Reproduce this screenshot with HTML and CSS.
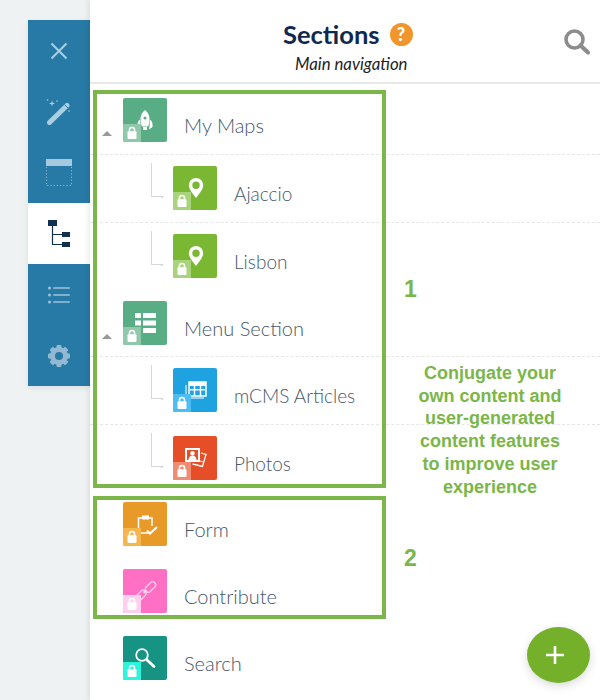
FILE: index.html
```html
<!DOCTYPE html>
<html lang="en">
<head>
    <meta charset="UTF-8">
    <meta name="viewport" content="width=device-width, initial-scale=1.0">
    <title>Sections</title>
    <link rel="stylesheet" href="styles.css">
</head>
<body>
    <svg class="defs" width="0" height="0">
        <symbol id="lock" viewBox="0 0 18 18">
            <path d="M5.700 8V6a3.300 3.300 0 0 1 6.600 0V8h-1.500V6a1.800 1.800 0 0 0-3.600 0V8z" fill="#fff"/>
            <rect x="4.500" y="7.300" width="9" height="7.700" rx="1" fill="#fff"/>
        </symbol>
    </svg>

    <aside class="side">
        <nav class="rail">
            <div class="rail-item">
                <svg width="24" height="24" viewBox="0 0 24 24"><path d="M4.500 4.500l15 15M19.500 4.500l-15 15" stroke="#a8cfe2" stroke-width="2" fill="none"/></svg>
            </div>
            <div class="rail-item">
                <svg width="26" height="26" viewBox="0 0 26 26">
                    <path d="M3.500 23.500L21 6.500" stroke="#a8cfe2" stroke-width="5" stroke-linecap="round"/>
                    <path d="M18.500 5.500l3.500 3.500" stroke="#277aa6" stroke-width="1"/>
                    <path d="M6 1.500l.7 2.300L9 4.500l-2.300.7L6 7.500l-.7-2.300L3 4.500l2.300-.7z" fill="#a8cfe2"/>
                    <circle cx="1.500" cy="1" r=".8" fill="#a8cfe2"/><circle cx="11" cy="2" r=".8" fill="#a8cfe2"/><circle cx="23" cy="12" r=".8" fill="#a8cfe2"/>
                </svg>
            </div>
            <div class="rail-item">
                <svg width="26" height="27" viewBox="0 0 26 27">
                    <rect x="0" y="0" width="26" height="7" fill="#a7c9dd"/>
                    <path d="M.5 8v18.500h25V8" fill="none" stroke="#8fbad3" stroke-dasharray="1.200 2"/>
                </svg>
            </div>
            <div class="rail-item active">
                <svg width="22" height="27" viewBox="0 0 22 27">
                    <path d="M4.500 4v20.500h10M4.500 14.500h10" fill="none" stroke="#10304f" stroke-width="1.200"/>
                    <rect x="0" y="0" width="9" height="6" fill="#10304f"/>
                    <rect x="14" y="12" width="8" height="5" fill="#10304f"/>
                    <rect x="14" y="22" width="8" height="5" fill="#10304f"/>
                </svg>
            </div>
            <div class="rail-item">
                <svg width="22" height="18" viewBox="0 0 22 18">
                    <g fill="#9cc3da">
                        <circle cx="1.500" cy="2" r="1.500"/><rect x="5" y="1.200" width="17" height="1.600" rx=".8"/>
                        <circle cx="1.500" cy="9" r="1.500"/><rect x="5" y="8.200" width="17" height="1.600" rx=".8"/>
                        <circle cx="1.500" cy="16" r="1.500"/><rect x="5" y="15.200" width="17" height="1.600" rx=".8"/>
                    </g>
                </svg>
            </div>
            <div class="rail-item">
                <svg width="24" height="24" viewBox="0 0 24 24">
                    <g fill="#93b9d2">
                        <circle cx="12" cy="12" r="9"/>
                        <rect x="9.500" y="1" width="5" height="22" rx="1"/>
                        <rect x="9.500" y="1" width="5" height="22" rx="1" transform="rotate(45 12 12)"/>
                        <rect x="9.500" y="1" width="5" height="22" rx="1" transform="rotate(90 12 12)"/>
                        <rect x="9.500" y="1" width="5" height="22" rx="1" transform="rotate(135 12 12)"/>
                    </g>
                    <circle cx="12" cy="12" r="4" fill="#277aa6"/>
                </svg>
            </div>
        </nav>
    </aside>

    <main class="main">
        <header class="head">
            <div class="head-title">
                <div class="title-line">
                    <h1>Sections</h1>
                    <span class="help">?</span>
                </div>
                <p class="subtitle">Main navigation</p>
            </div>
            <svg class="head-search" width="28" height="28" viewBox="0 0 28 28">
                <circle cx="11.500" cy="11.500" r="8.500" fill="none" stroke="#8c8c8c" stroke-width="3.600"/>
                <path d="M17.500 17.500l7.500 7" stroke="#8c8c8c" stroke-width="4.200" stroke-linecap="round"/>
            </svg>
        </header>

        <div class="rows">
            <div class="row tall dashed">
                <span class="caret"></span>
                <div class="tile t-sea">
                    <svg class="glyph" viewBox="0 0 44 44" fill="#fff">
                        <path d="M22 12c3.200 2.500 4.500 5.500 4.500 9 0 3-.5 5.500-1.500 7.500h-6c-1-2-1.500-4.500-1.500-7.500 0-3.500 1.300-6.500 4.500-9z"/>
                        <path d="M17 21.500c-2 1.500-3 4-2.500 7.500l3.500 2.500-.5-3.500zM27 21.500c2 1.500 3 4 2.500 7.500l-3.500 2.500.5-3.500z"/>
                        <rect x="20" y="29" width="4" height="3"/>
                        <circle cx="22" cy="20" r="1.500" fill="#58ad85"/>
                    </svg>
                    <span class="lock"><svg width="18" height="18"><use href="#lock"/></svg></span>
                </div>
                <span class="label">My Maps</span>
            </div>

            <div class="row tall dashed child">
                <span class="elbow"></span>
                <div class="tile t-green">
                    <svg class="glyph" viewBox="0 0 44 44">
                        <path fill-rule="evenodd" fill="#fff" d="M23 12a7.200 7.200 0 0 1 7.200 7.200c0 4-3.700 8-7.200 12.800-3.500-4.800-7.200-8.800-7.200-12.800A7.200 7.200 0 0 1 23 12zm0 3.500a3.700 3.700 0 1 0 0 7.400 3.700 3.700 0 0 0 0-7.400z"/>
                    </svg>
                    <span class="lock"><svg width="18" height="18"><use href="#lock"/></svg></span>
                </div>
                <span class="label">Ajaccio</span>
            </div>

            <div class="row child">
                <span class="elbow"></span>
                <div class="tile t-green">
                    <svg class="glyph" viewBox="0 0 44 44">
                        <path fill-rule="evenodd" fill="#fff" d="M23 12a7.200 7.200 0 0 1 7.200 7.200c0 4-3.700 8-7.200 12.800-3.500-4.800-7.200-8.800-7.200-12.800A7.200 7.200 0 0 1 23 12zm0 3.500a3.700 3.700 0 1 0 0 7.400 3.700 3.700 0 0 0 0-7.400z"/>
                    </svg>
                    <span class="lock"><svg width="18" height="18"><use href="#lock"/></svg></span>
                </div>
                <span class="label">Lisbon</span>
            </div>

            <div class="row dashed">
                <span class="caret"></span>
                <div class="tile t-sea">
                    <svg class="glyph" viewBox="0 0 44 44" fill="#fff">
                        <rect x="12" y="12" width="6" height="5"/><rect x="20" y="12" width="13" height="5"/>
                        <rect x="12" y="19.500" width="6" height="5"/><rect x="20" y="19.500" width="13" height="5"/>
                        <rect x="20" y="27" width="13" height="5"/>
                    </svg>
                    <span class="lock"><svg width="18" height="18"><use href="#lock"/></svg></span>
                </div>
                <span class="label">Menu Section</span>
            </div>

            <div class="row tall dashed child">
                <span class="elbow"></span>
                <div class="tile t-blue">
                    <svg class="glyph" viewBox="0 0 44 44">
                        <path d="M13 17v13h18" fill="none" stroke="#bfe3f7" stroke-width="1.500"/>
                        <rect x="16" y="14" width="17" height="14" fill="none" stroke="#fff" stroke-width="1.500"/>
                        <rect x="16" y="14" width="17" height="4" fill="#fff"/>
                        <path d="M21.500 18v10M27.500 18v10" stroke="#fff" stroke-width="1.500"/>
                        <rect x="17" y="21" width="15" height="1.500" fill="#fff"/>
                    </svg>
                    <span class="lock"><svg width="18" height="18"><use href="#lock"/></svg></span>
                </div>
                <span class="label">mCMS Articles</span>
            </div>

            <div class="row short child">
                <span class="elbow"></span>
                <div class="tile t-red">
                    <svg class="glyph" viewBox="0 0 44 44">
                        <path d="M28 17l5 1.500-3.500 12-10-2.500" fill="none" stroke="#fff" stroke-width="1.300"/>
                        <path d="M27 25l3.500 1M24 29l4 1" stroke="#fff" stroke-width="1"/>
                        <rect x="12" y="12" width="15" height="14" fill="#fff"/>
                        <rect x="14" y="14" width="11" height="10" fill="#e54e26"/>
                        <circle cx="19.500" cy="17.300" r="2.200" fill="#fff"/>
                        <path d="M15.500 24c0-3 1.800-4.500 4-4.500s4 1.500 4 4.500z" fill="#fff"/>
                    </svg>
                    <span class="lock"><svg width="18" height="18"><use href="#lock"/></svg></span>
                </div>
                <span class="label">Photos</span>
            </div>

            <div class="row">
                <div class="tile t-orange">
                    <svg class="glyph" viewBox="0 0 44 44">
                        <path d="M19 16h-3.500v15H27M26 16h3v8" fill="none" stroke="#fff" stroke-width="1.500"/>
                        <rect x="19" y="13.500" width="7" height="4" fill="#fff"/>
                        <path d="M24 28.500l3 3 7-6.500" fill="none" stroke="#fff" stroke-width="2"/>
                    </svg>
                    <span class="lock"><svg width="18" height="18"><use href="#lock"/></svg></span>
                </div>
                <span class="label">Form</span>
            </div>

            <div class="row">
                <div class="tile t-pink">
                    <svg class="glyph" viewBox="0 0 44 44" fill="none" stroke="#ffd0ee" stroke-width="1.200">
                        <rect x="24.500" y="12" width="6" height="12" rx="3" transform="rotate(45 27.500 18)"/>
                        <rect x="15" y="20.500" width="6" height="12" rx="3" transform="rotate(45 18 26.500)"/>
                        <path d="M20.500 24l3-3" stroke-width="2"/>
                    </svg>
                    <span class="lock"><svg width="18" height="18"><use href="#lock"/></svg></span>
                </div>
                <span class="label">Contribute</span>
            </div>

            <div class="row">
                <div class="tile t-teal">
                    <svg class="glyph" viewBox="0 0 44 44">
                        <circle cx="19" cy="19" r="5.800" fill="none" stroke="#fff" stroke-width="1.800"/>
                        <path d="M24 24l7 6.500" stroke="#fff" stroke-width="2.800" stroke-linecap="round"/>
                    </svg>
                    <span class="lock"><svg width="18" height="18"><use href="#lock"/></svg></span>
                </div>
                <span class="label">Search</span>
            </div>
        </div>
    </main>

    <!-- green notes drawn over the list -->
    <div class="note-box box-one"></div>
    <div class="note-box box-two"></div>
    <span class="note-num num-one">1</span>
    <span class="note-num num-two">2</span>
    <p class="note-text">Conjugate your own content and user-generated content features to improve user experience</p>

    <button class="fab">
        <svg width="20" height="20" viewBox="0 0 20 20"><path d="M10 1v18M1 10h18" stroke="#fff" stroke-width="2.600"/></svg>
    </button>
</body>
</html>
```

FILE: styles.css
```css
html, body {
    height: 700px;
}
body {
    margin: 0;
    display: flex;
    overflow: hidden;
    position: relative;
    background: #eef2f3;
    font-family: Lato, "Open Sans", sans-serif;
}
.defs {
    position: absolute;
}
.side {
    width: 90px;
    flex: none;
    padding: 20px 0 0 28px;
    box-sizing: border-box;
}
.rail {
    background: #277aa6;
    box-shadow: 0 2px 6px rgba(0, 0, 0, 0.08);
}
.rail-item {
    height: 61px;
    display: flex;
    align-items: center;
    justify-content: center;
}
.rail-item.active {
    background: #fff;
}
.main {
    flex: 1;
    background: #fff;
    box-shadow: -2px 0 5px rgba(0, 0, 0, 0.08);
}
.head {
    height: 84px;
    box-sizing: border-box;
    border-bottom: 2px solid #e8eaea;
    display: flex;
    align-items: flex-start;
}
.head-title {
    margin-left: 193px;
    padding-top: 18px;
}
.title-line {
    display: flex;
    align-items: center;
    gap: 10px;
}
.head h1 {
    margin: 0;
    font-size: 25.500px;
    line-height: 32px;
    font-weight: 700;
    color: #10294d;
}
.help {
    width: 23px;
    height: 23px;
    border-radius: 50%;
    background: #f0962c;
    color: #fff;
    font-size: 18px;
    line-height: 23px;
    font-weight: 900;
    text-align: center;
}
.subtitle {
    margin: 4px 0 0 12px;
    font-size: 16.800px;
    line-height: 20px;
    font-style: italic;
    font-weight: 400;
    color: #222;
    white-space: nowrap;
}
.head-search {
    margin: 28px 9px 0 auto;
}
.rows {
    padding-top: 3px;
}
.row {
    height: 67px;
    box-sizing: border-box;
    padding: 11px 0 0 33px;
    display: flex;
    align-items: flex-start;
}
.row.tall {
    height: 68px;
}
.row.short {
    height: 66px;
}
.row.dashed {
    border-bottom: 1px dashed #e4e6e8;
}
.row.child {
    padding-left: 61px;
}
.caret {
    width: 0;
    height: 0;
    margin: 33px 11px 0 -21px;
    border-left: 5px solid transparent;
    border-right: 5px solid transparent;
    border-bottom: 5px solid #999;
}
.elbow {
    width: 11px;
    height: 33px;
    margin: -3px 10px 0 0;
    flex: none;
    position: relative;
    border-left: 1px solid #d8d8d8;
    border-bottom: 1px solid #d8d8d8;
}
.elbow::after {
    content: "";
    position: absolute;
    right: -1px;
    bottom: -2px;
    border-top: 1.500px solid transparent;
    border-bottom: 1.500px solid transparent;
    border-left: 3px solid #cfcfcf;
}
.tile {
    width: 44px;
    height: 44px;
    flex: none;
    position: relative;
    border-radius: 2px;
    overflow: hidden;
}
.glyph {
    display: block;
    width: 44px;
    height: 44px;
}
.lock {
    position: absolute;
    left: 0;
    bottom: 0;
    width: 18px;
    height: 18px;
    display: flex;
}
.t-sea { background: #58ad85; }
.t-sea .lock { background: #8fc9aa; }
.t-green { background: #7ab733; }
.t-green .lock { background: #a9d47c; }
.t-blue { background: #1fa3e0; }
.t-blue .lock { background: #4dbdf3; }
.t-red { background: #e54e26; }
.t-red .lock { background: #ef8d74; }
.t-orange { background: #e89a28; }
.t-orange .lock { background: #f6b64f; }
.t-pink { background: #ff6fc3; }
.t-pink .lock { background: #fdd0ef; }
.t-teal { background: #169383; }
.t-teal .lock { background: #2df5dc; }
.label {
    margin: 15px 0 0 17px;
    font-size: 20px;
    line-height: 24px;
    font-weight: 300;
    color: #46586a;
}
.child .label {
    margin-top: 16px;
    font-size: 19px;
}
.note-box {
    position: absolute;
    left: 93px;
    width: 293px;
    box-sizing: border-box;
    border: 4px solid #7ab648;
}
.box-one {
    top: 90px;
    height: 398px;
}
.box-two {
    top: 496px;
    height: 123px;
}
.note-num {
    position: absolute;
    left: 404px;
    font-family: "Liberation Sans", Arial, sans-serif;
    font-size: 23px;
    line-height: 26px;
    font-weight: 700;
    color: #7ab648;
}
.num-one {
    top: 276px;
}
.num-two {
    top: 545px;
}
.note-text {
    position: absolute;
    left: 412px;
    top: 362px;
    width: 156px;
    margin: 0;
    font-family: "Liberation Sans", Arial, sans-serif;
    font-size: 18px;
    line-height: 22.700px;
    font-weight: 700;
    text-align: center;
    color: #7ab648;
}
.fab {
    position: absolute;
    left: 527px;
    top: 627px;
    width: 63px;
    height: 56px;
    padding: 0 7px 0 0;
    border: 0;
    border-radius: 50%;
    background: #74b02a;
    box-shadow: 0 3px 10px rgba(0, 0, 0, 0.15);
    display: flex;
    align-items: center;
    justify-content: center;
}
```
